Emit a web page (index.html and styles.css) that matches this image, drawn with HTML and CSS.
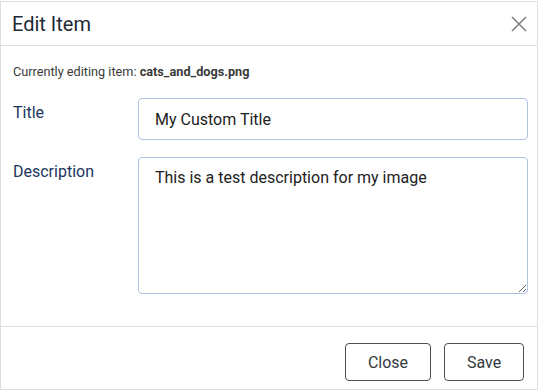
FILE: index.html
```html
<!DOCTYPE html>
<html lang="en">
<head>
  <meta charset="UTF-8">
  <title>Edit Item</title>
  <link rel="stylesheet" href="styles.css">
</head>
<body>
  <div class="dialog">
    <div class="dialog-header">
      <h1>Edit Item</h1>
      <button class="close-x" aria-label="Close">
        <svg width="16" height="16" viewBox="0 0 16 16">
          <path d="M1 1 L15 15 M15 1 L1 15" stroke="#838383" stroke-width="1.6" fill="none"/>
        </svg>
      </button>
    </div>

    <div class="dialog-body">
      <p class="current">Currently editing item: <strong>cats_and_dogs.png</strong></p>
      <div class="form-row">
        <label for="title">Title</label>
        <input type="text" id="title" value="My Custom Title">
      </div>
      <div class="form-row">
        <label for="desc">Description</label>
        <textarea id="desc">This is a test description for my image</textarea>
      </div>
    </div>

    <div class="dialog-footer">
      <button class="btn">Close</button>
      <button class="btn btn-save">Save</button>
    </div>
  </div>
</body>
</html>
```

FILE: styles.css
```css
* {
  margin: 0;
  padding: 0;
  box-sizing: border-box;
  font-family: Roboto, 'Liberation Sans', sans-serif;
}
body {
  background-color: #fff;
  padding-top: 1px;
}
.dialog {
  width: 538px;
  height: 389px;
  border: 1px solid #dedede;
  background-color: #fff;
  display: flex;
  flex-direction: column;
}
.dialog-header {
  height: 44px;
  border-bottom: 1px solid #dedede;
  display: flex;
  align-items: center;
  justify-content: space-between;
  padding: 0 9px 0 11px;
}
.dialog-header h1 {
  font-size: 20px;
  font-weight: 400;
  color: #1f2a37;
}
.close-x {
  background: none;
  border: none;
  width: 18px;
  height: 18px;
  display: flex;
  align-items: center;
  justify-content: center;
}
.dialog-body {
  flex-grow: 1;
  padding: 17px 9px 0 12px;
}
.current {
  font-size: 12.7px;
  line-height: 18px;
  color: #3a3a3a;
  margin-bottom: 17px;
}
.current strong {
  font-weight: 700;
}
.form-row {
  display: grid;
  grid-template-columns: 125px 1fr;
  margin-bottom: 17px;
}
.form-row label {
  font-size: 16px;
  line-height: 24px;
  color: #1b365d;
  padding-top: 3px;
}
.form-row input,
.form-row textarea {
  width: 100%;
  border: 1px solid #aec3df;
  border-radius: 4px;
  font-size: 16px;
  line-height: 24px;
  color: #222;
  padding: 8px 16px;
  outline: none;
}
.form-row input {
  height: 42px;
}
.form-row textarea {
  height: 137px;
  resize: vertical;
}
.dialog-footer {
  height: 63px;
  border-top: 1px solid #dedede;
  display: flex;
  justify-content: flex-end;
  gap: 13px;
  padding: 16px 13px 0 0;
}
.btn {
  height: 38px;
  width: 86px;
  border: 1px solid #4a4f55;
  border-radius: 4px;
  background-color: #fff;
  font-size: 16px;
  color: #343a40;
}
.btn-save {
  width: 80px;
}
```
